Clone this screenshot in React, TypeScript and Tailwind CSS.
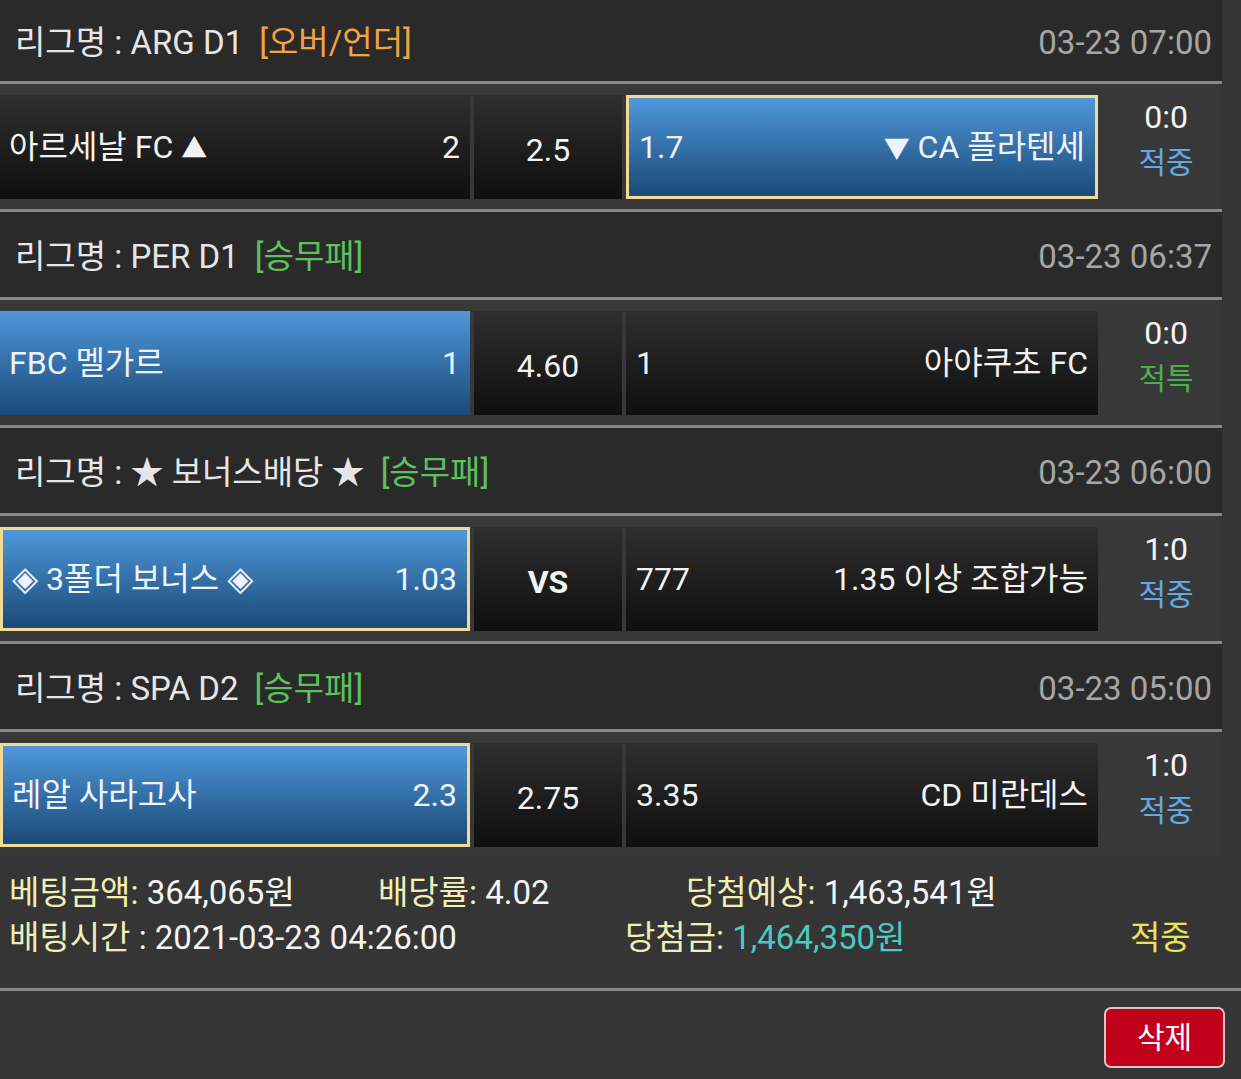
import React from 'react'

type Pick = 'home' | 'away'

type Match = {
  league: string
  market: string
  marketColor: string
  date: string
  home: React.ReactNode
  homeOdds: string
  draw: string
  drawBold?: boolean
  awayOdds: string
  away: React.ReactNode
  pick: Pick
  framed: boolean
  score: string
  status: string
  statusColor: string
}

const ORANGE = 'text-[#f0a443]'
const GREEN = 'text-[#5dc15d]'

const Tri = ({ c }: { c: string }) => <span className="text-[26px]">{c}</span>
const Dia = () => <span className="text-[34px] leading-none">◈</span>

const MATCHES: Match[] = [
  {
    league: 'ARG D1',
    market: '[오버/언더]',
    marketColor: ORANGE,
    date: '03-23 07:00',
    home: (
      <>
        아르세날 FC <Tri c="▲" />
      </>
    ),
    homeOdds: '2',
    draw: '2.5',
    awayOdds: '1.7',
    away: (
      <>
        <Tri c="▼" /> CA 플라텐세
      </>
    ),
    pick: 'away',
    framed: true,
    score: '0:0',
    status: '적중',
    statusColor: 'text-[#62a9e6]',
  },
  {
    league: 'PER D1',
    market: '[승무패]',
    marketColor: GREEN,
    date: '03-23 06:37',
    home: 'FBC 멜가르',
    homeOdds: '1',
    draw: '4.60',
    awayOdds: '1',
    away: '아야쿠초 FC',
    pick: 'home',
    framed: false,
    score: '0:0',
    status: '적특',
    statusColor: 'text-[#4fae4c]',
  },
  {
    league: '★ 보너스배당 ★',
    market: '[승무패]',
    marketColor: GREEN,
    date: '03-23 06:00',
    home: (
      <>
        <Dia /> 3폴더 보너스 <Dia />
      </>
    ),
    homeOdds: '1.03',
    draw: 'VS',
    drawBold: true,
    awayOdds: '777',
    away: '1.35 이상 조합가능',
    pick: 'home',
    framed: true,
    score: '1:0',
    status: '적중',
    statusColor: 'text-[#62a9e6]',
  },
  {
    league: 'SPA D2',
    market: '[승무패]',
    marketColor: GREEN,
    date: '03-23 05:00',
    home: '레알 사라고사',
    homeOdds: '2.3',
    draw: '2.75',
    awayOdds: '3.35',
    away: 'CD 미란데스',
    pick: 'home',
    framed: true,
    score: '1:0',
    status: '적중',
    statusColor: 'text-[#62a9e6]',
  },
]

const FONT = { fontFamily: 'Roboto, "Noto Sans CJK KR", "DejaVu Sans", sans-serif' }

function cellClass(active: boolean, framed: boolean) {
  if (!active) return 'bg-linear-to-b from-[#2f2f2f] to-[#0f0f0f] text-[#f2f2f2]'
  return framed
    ? 'bg-linear-to-b from-[#4f98db] to-[#1b4a78] text-[#eef4ff] border-[3px] border-[#f3d991]'
    : 'bg-linear-to-b from-[#4f98db] to-[#1b4a78] text-[#eef4ff]'
}

function Line() {
  return <div className="h-[3px] bg-[#878787]" />
}

function MatchBlock({ m, first }: { m: Match; first: boolean }) {
  return (
    <>
      <div
        className={`flex items-center justify-between bg-[#2a2a2a] pl-[15px] pr-[10px] pt-1 text-[33px] ${
          first ? 'h-[81px]' : 'h-[85px]'
        }`}
      >
        <div className="text-[#e6e6e6]">
          리그명 : {m.league}
          <span className={`ml-[16px] ${m.marketColor}`}>{m.market}</span>
        </div>
        <div className="text-[#a6a6a6]">{m.date}</div>
      </div>
      <Line />
      <div className="flex h-[125px] bg-[#383838] pt-[11px] pb-[10px] text-[32px]">
        <div
          className={`flex h-[104px] w-[470px] items-center justify-between pl-[9px] pr-[10px] ${cellClass(
            m.pick === 'home',
            m.framed,
          )}`}
        >
          <span className="whitespace-pre">{m.home}</span>
          <span>{m.homeOdds}</span>
        </div>
        <div
          className={`ml-1 flex h-[104px] w-[148px] items-center justify-center pt-[6px] ${cellClass(false, false)} ${
            m.drawBold ? 'font-bold' : ''
          }`}
        >
          {m.draw}
        </div>
        <div
          className={`ml-1 flex h-[104px] w-[472px] items-center justify-between pl-[10px] pr-[10px] ${cellClass(
            m.pick === 'away',
            m.framed,
          )}`}
        >
          <span>{m.awayOdds}</span>
          <span className="whitespace-pre">{m.away}</span>
        </div>
        <div className="flex flex-1 flex-col items-center pl-[12px]">
          <div className="leading-[45px] text-[#f4f4f4]">{m.score}</div>
          <div className={`text-[30px] leading-[45px] ${m.statusColor}`}>{m.status}</div>
        </div>
      </div>
    </>
  )
}

export default function App() {
  return (
    <div className="min-h-[1079px] w-[1241px] bg-[#343434] text-white" style={FONT}>
      <div className="w-[1222px]">
        {MATCHES.map((m, i) => (
          <div key={m.league + m.date}>
            <MatchBlock m={m} first={i === 0} />
            {i < MATCHES.length - 1 ? <Line /> : null}
          </div>
        ))}
      </div>

      <div className="h-[131px] bg-[#353535] pl-[9px] pt-[13px] text-[33px] leading-[45px]">
        <div className="flex">
          <div className="w-[369px]">
            <span className="text-[#f0efb5]">베팅금액:</span> <span className="text-[#f4f4f4]">364,065원</span>
          </div>
          <div className="w-[308px]">
            <span className="text-[#f0efb5]">배당률:</span> <span className="text-[#f4f4f4]">4.02</span>
          </div>
          <div>
            <span className="text-[#f0efb5]">당첨예상:</span> <span className="text-[#f4f4f4]">1,463,541원</span>
          </div>
        </div>
        <div className="flex">
          <div className="w-[616px]">
            <span className="text-[#f0efb5]">배팅시간</span>{' '}
            <span className="text-[#f4f4f4]">: 2021-03-23 04:26:00</span>
          </div>
          <div className="w-[505px]">
            <span className="text-[#f0efb5]">당첨금:</span> <span className="text-[#4ccac1]">1,464,350원</span>
          </div>
          <div className="text-[#e8e35a]">적중</div>
        </div>
      </div>
      <div className="h-[3px] bg-[#878787]" />
      <div className="flex justify-end bg-[#353535] pt-[16px] pr-[16px] pb-[10px]">
        <button className="flex h-[61px] w-[121px] items-center justify-center rounded-[7px] border-2 border-[#dcc6c6] bg-[#c1001b] text-[30px] text-white">
          삭제
        </button>
      </div>
    </div>
  )
}
